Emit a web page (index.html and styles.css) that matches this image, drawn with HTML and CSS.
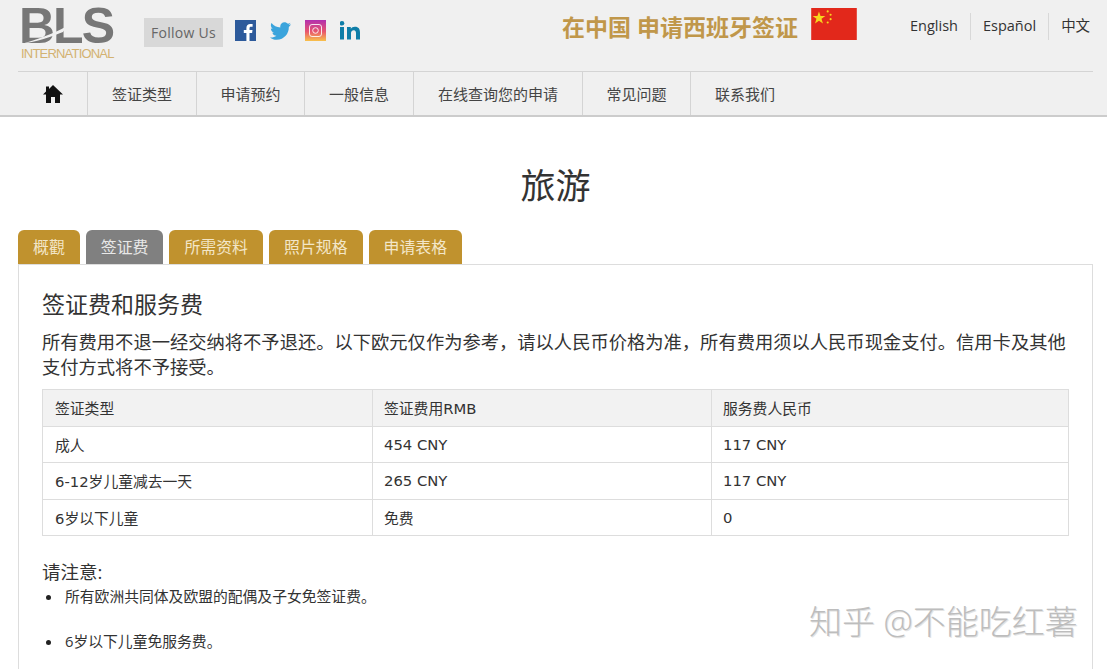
FILE: index.html
```html
<!DOCTYPE html>
<html lang="zh-CN">
<head>
    <meta charset="UTF-8">
    <title>旅游 - 签证费</title>
    <link rel="stylesheet" href="styles.css">
</head>
<body>
    <header class="site-header">
        <div class="top-row">
            <div class="logo">
                <div class="logo-mark">BLS</div>
                <svg class="logo-swoosh" width="46" height="18" viewBox="0 0 46 18"><path d="M0 18 C14 14 32 8 46 0 L42 6 C30 11 14 16 0 18Z" fill="#f0f0f0"/></svg>
                <div class="logo-sub">INTERNATIONAL</div>
            </div>
            <div class="follow">Follow Us</div>
            <div class="social">
                <svg width="21" height="21" viewBox="0 0 21 21"><rect width="21" height="21" fill="#2d5a9b"/><path d="M14.500 21v-8h2.600l.4-3h-3V8.200c0-.9.3-1.500 1.500-1.500h1.600V4c-.3 0-1.200-.1-2.300-.1-2.300 0-3.900 1.400-3.900 4V10H8.800v3h2.600v8z" fill="#fff"/></svg>
                <svg width="21" height="18" viewBox="0 0 24 20"><path d="M24 2.400c-.9.400-1.800.7-2.800.8 1-.6 1.800-1.600 2.200-2.700-1 .6-2 1-3.100 1.200C19.300.6 18 0 16.600 0c-2.700 0-4.900 2.200-4.900 4.900 0 .4 0 .8.100 1.100C7.700 5.800 4.100 3.900 1.700.9 1.200 1.600 1 2.500 1 3.400c0 1.700.9 3.200 2.200 4.100-.8 0-1.600-.2-2.200-.6v.1c0 2.400 1.700 4.400 3.900 4.800-.4.100-.8.200-1.300.2-.3 0-.6 0-.9-.1.600 2 2.400 3.400 4.600 3.400-1.700 1.300-3.800 2.100-6.100 2.100-.4 0-.8 0-1.200-.1C2.200 19.200 4.800 20 7.500 20c9.100 0 14-7.500 14-14v-.6c1-.7 1.800-1.600 2.500-3z" fill="#3ba4dc"/></svg>
                <svg width="21" height="21" viewBox="0 0 21 21"><defs><linearGradient id="ig" x1="0" y1="0" x2="0" y2="1"><stop offset="0" stop-color="#b22fb0"/><stop offset=".55" stop-color="#e8566e"/><stop offset="1" stop-color="#f8c14a"/></linearGradient></defs><rect width="21" height="21" fill="url(#ig)"/><rect x="4.500" y="4.500" width="12" height="12" rx="2.500" fill="none" stroke="#fff" stroke-width="1" opacity=".85"/><circle cx="10.500" cy="10.500" r="2.800" fill="none" stroke="#fff" stroke-width="1" opacity=".85"/></svg>
                <svg width="21" height="19" viewBox="0 0 21 19"><rect x="0" y="6" width="4" height="12.500" fill="#0f7ea8"/><circle cx="2" cy="2.300" r="2.300" fill="#0f7ea8"/><path d="M7 6h3.800v1.800C11.500 6.600 13 5.700 14.900 5.700c3.800 0 5.100 2.300 5.100 5.800v7h-4v-6.200c0-1.700-.4-3.100-2.200-3.100-1.900 0-2.800 1.300-2.800 3.100v6.200H7z" fill="#0f7ea8"/></svg>
            </div>
            <div class="slogan">在中国 申请西班牙签证</div>
            <svg class="flag" width="46" height="32" viewBox="0 0 47 33"><rect width="47" height="33" fill="#e2281b"/><polygon points="8,3.500 9.600,8.200 14.600,8.200 10.600,11.200 12.100,16 8,13.100 3.900,16 5.400,11.200 1.400,8.200 6.400,8.200" fill="#f7d51d"/><circle cx="17" cy="3.500" r="1.100" fill="#f7d51d"/><circle cx="20" cy="7" r="1.100" fill="#f7d51d"/><circle cx="20" cy="11.500" r="1.100" fill="#f7d51d"/><circle cx="17" cy="15" r="1.100" fill="#f7d51d"/></svg>
            <ul class="lang">
                <li>English</li>
                <li>Español</li>
                <li>中文</li>
            </ul>
        </div>
        <nav class="main-nav">
            <a class="nav-home">
                <svg width="20" height="18" viewBox="0 0 20 18"><path d="M10 0 L20 9.500 H17 V18 H12 V12 H8 V18 H3 V9.500 H0 L3 6.600 V1.500 H6 V3.900Z" fill="#111"/></svg>
            </a>
            <a class="nav-item w1">签证类型</a>
            <a class="nav-item w2">申请预约</a>
            <a class="nav-item w3">一般信息</a>
            <a class="nav-item w4">在线查询您的申请</a>
            <a class="nav-item w5">常见问题</a>
            <a class="nav-item w6">联系我们</a>
        </nav>
    </header>

    <h1 class="page-title">旅游</h1>

    <div class="content">
        <div class="tabs">
            <div class="tab">概觀</div>
            <div class="tab active">签证费</div>
            <div class="tab">所需资料</div>
            <div class="tab">照片规格</div>
            <div class="tab">申请表格</div>
        </div>
        <div class="panel">
            <h2>签证费和服务费</h2>
            <p class="intro">所有费用不退一经交纳将不予退还。以下欧元仅作为参考，请以人民币价格为准，所有费用须以人民币现金支付。信用卡及其他支付方式将不予接受。</p>
            <table class="fees">
                <tr class="head">
                    <td class="col-a">签证类型</td>
                    <td class="col-b">签证费用RMB</td>
                    <td>服务费人民币</td>
                </tr>
                <tr>
                    <td>成人</td>
                    <td>454 CNY</td>
                    <td>117 CNY</td>
                </tr>
                <tr>
                    <td>6-12岁儿童减去一天</td>
                    <td>265 CNY</td>
                    <td>117 CNY</td>
                </tr>
                <tr>
                    <td>6岁以下儿童</td>
                    <td>免费</td>
                    <td>0</td>
                </tr>
            </table>
            <p class="note">请注意:</p>
            <ul class="note-list">
                <li>所有欧洲共同体及欧盟的配偶及子女免签证费。</li>
                <li>6岁以下儿童免服务费。</li>
            </ul>
        </div>
    </div>

    <div class="watermark">知乎 @不能吃红薯</div>
</body>
</html>
```

FILE: styles.css
```css
html, body {
    height: 669px;
    overflow: hidden;
}
body {
    font-family: "Open Sans", "Noto Sans CJK SC", sans-serif;
    margin: 0;
    background-color: #fff;
    color: #333;
    position: relative;
}
.site-header {
    background-color: #f0f0f0;
    border-bottom: 2px solid #ccc;
    padding: 0 14px 0 18px;
    height: 115px;
}
.top-row {
    display: flex;
    align-items: flex-start;
    height: 71px;
    border-bottom: 1px solid #d4d4d4;
}
.top-row > * {
    flex-shrink: 0;
}
.logo {
    position: relative;
    width: 125px;
    padding: 8px 0 0 1px;
}
.logo-mark {
    font-family: "Liberation Sans", sans-serif;
    font-size: 50px;
    line-height: 37px;
    font-weight: 700;
    color: #777;
    letter-spacing: -2px;
}
.logo-swoosh {
    position: absolute;
    left: 3px;
    top: 26px;
}
.logo-sub {
    font-family: "Liberation Sans", sans-serif;
    font-size: 13px;
    line-height: 13px;
    margin: 2px 0 0 2px;
    color: #d3b271;
    letter-spacing: -0.800px;
}
.follow {
    margin-top: 18px;
    width: 79px;
    height: 29px;
    line-height: 29px;
    text-align: center;
    background: #d8d8d8;
    color: #666;
    font-size: 14px;
    letter-spacing: 0.3px;
}
.social {
    display: flex;
    align-items: center;
    gap: 14px;
    margin: 20px 0 0 12px;
    height: 21px;
}
.slogan {
    margin: 12px 0 0 201px;
    width: 249px;
    font-size: 23px;
    line-height: 30px;
    font-weight: 700;
    color: #c0974a;
    white-space: nowrap;
}
.flag {
    margin: 8px 0 0 0;
}
.lang {
    display: flex;
    list-style: none;
    margin: 13px 0 0 40px;
    padding: 0;
    font-size: 14.500px;
    color: #333;
    white-space: nowrap;
}
.lang li {
    height: 27px;
    line-height: 26px;
    padding: 0 12px;
    border-left: 1px solid #d8d8d8;
}
.lang li:first-child {
    padding-left: 13px;
    border-left: 0;
}
.lang li:last-child {
    padding-right: 0;
}
.main-nav {
    display: flex;
    height: 43px;
}
.main-nav a {
    display: flex;
    align-items: center;
    justify-content: center;
    border-right: 1px solid #d4d4d4;
    font-size: 15px;
    color: #444;
}
.nav-home { width: 69px; }
.w1 { width: 108px; }
.w2 { width: 107px; }
.w3 { width: 108px; }
.w4 { width: 168px; }
.w5 { width: 107px; }
.main-nav .w6 { width: 108px; border-right: 0; }
.page-title {
    margin: 0;
    padding: 45px 0 0 4px;
    height: 68px;
    text-align: center;
    font-size: 35px;
    line-height: 47px;
    font-weight: 400;
    color: #333;
}
.content {
    margin: 0 14px 0 18px;
}
.tabs {
    display: flex;
    gap: 6px;
}
.tab {
    background: #c0922e;
    color: #f3e6c8;
    height: 34px;
    line-height: 34px;
    padding: 0 15px;
    border-radius: 6px 6px 0 0;
    font-size: 15.900px;
    white-space: nowrap;
}
.tab.active {
    background: #808080;
    color: #e8e8e8;
}
.panel {
    border: 1px solid #ddd;
    border-bottom: 0;
    padding: 0 23px;
    height: 420px;
}
.panel h2 {
    margin: 0;
    padding-top: 22px;
    font-size: 23px;
    line-height: 34px;
    font-weight: 400;
    color: #333;
}
.intro {
    margin: 8px 0 10px;
    font-size: 18.300px;
    line-height: 25px;
    color: #333;
}
.fees {
    width: 1027px;
    border-collapse: collapse;
    font-family: "DejaVu Sans", "Noto Sans CJK SC", sans-serif;
    font-size: 14.800px;
    color: #333;
}
.fees td {
    height: 35.500px;
    padding: 0 12px;
    border: 1px solid #ddd;
}
.fees td + td {
    padding-left: 11px;
}
.fees .head td {
    background: #f2f2f2;
}
.fees .col-a { width: 305px; }
.fees .col-b { width: 315px; }
.note {
    margin: 23px 0 0;
    font-size: 18.500px;
    line-height: 26px;
}
.note-list {
    margin: 0;
    padding: 0;
    list-style: none;
    font-size: 14.800px;
    line-height: 22px;
}
.note-list li {
    margin-bottom: 23px;
}
.note-list li::before {
    content: "";
    display: inline-block;
    width: 5px;
    height: 5px;
    margin: 0 14px 2px 4px;
    border-radius: 50%;
    background: #222;
}
.watermark {
    position: absolute;
    left: 809px;
    top: 600px;
    font-size: 33px;
    line-height: 44px;
    font-weight: 300;
    color: #bdbdbd;
    text-shadow: 1px 1px 0 #e4e4e4;
    white-space: nowrap;
}
```
